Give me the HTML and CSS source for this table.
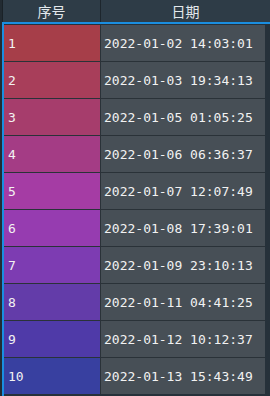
FILE: index.html
```html
<!DOCTYPE html>
<html>
<head>
<meta charset="utf-8">
<link rel="stylesheet" href="styles.css">
</head>
<body>
<div class="sheet">
  <div class="head">
    <div class="hcell">序号</div>
    <div class="hcell">日期</div>
  </div>
  <div class="body">
    <div class="grid">
      <div class="num r1">1</div><div class="date">2022-01-02 14:03:01</div>
      <div class="num r2">2</div><div class="date">2022-01-03 19:34:13</div>
      <div class="num r3">3</div><div class="date">2022-01-05 01:05:25</div>
      <div class="num r4">4</div><div class="date">2022-01-06 06:36:37</div>
      <div class="num r5">5</div><div class="date">2022-01-07 12:07:49</div>
      <div class="num r6">6</div><div class="date">2022-01-08 17:39:01</div>
      <div class="num r7">7</div><div class="date">2022-01-09 23:10:13</div>
      <div class="num r8">8</div><div class="date">2022-01-11 04:41:25</div>
      <div class="num r9">9</div><div class="date">2022-01-12 10:12:37</div>
      <div class="num r10">10</div><div class="date">2022-01-13 15:43:49</div>
    </div>
  </div>
</div>
</body>
</html>
```
FILE: styles.css
```css
html, body {
  margin: 0;
  padding: 0;
  background: #222b32;
  width: 270px;
  height: 396px;
  overflow: hidden;
}
.sheet {
  display: flex;
  flex-direction: column;
  width: 270px;
  height: 396px;
  background: #222b32;
}
.head {
  display: grid;
  grid-template-columns: 97px 1fr;
  column-gap: 1px;
  height: 22px;
  margin-left: 2px;
  border-left: 1px solid #1a2228;
  background: #1d262d;
}
.hcell {
  background: #2e3c47;
  color: #e3e8ec;
  font-family: "Noto Sans CJK SC", "Noto Sans", sans-serif;
  font-size: 14px;
  line-height: 22px;
  text-align: center;
}
.body {
  flex: 1;
  margin-left: 2px;
  border-left: 2px solid #1a8ee0;
  border-top: 2px solid #1a8ee0;
  padding-top: 1px;
  background: #26313a;
}
.grid {
  display: grid;
  grid-template-columns: 96px 164px;
  grid-auto-rows: 36px;
  gap: 1px;
  width: 261px;
  background: #2a3238;
}
.num, .date {
  font-family: "DejaVu Sans Mono", monospace;
  font-size: 13px;
  color: #f2f2f2;
  display: flex;
  align-items: center;
  padding-left: 4px;
}
.date {
  background: #474f56;
  padding-left: 3px;
}
.r1 { background: #a63e49; }
.r2 { background: #a83e5a; }
.r3 { background: #a63d6c; }
.r4 { background: #a43c85; }
.r5 { background: #a53ca4; }
.r6 { background: #963cb0; }
.r7 { background: #7d3cb2; }
.r8 { background: #633ca9; }
.r9 { background: #4f3aa8; }
.r10 { background: #3840a0; }
```
